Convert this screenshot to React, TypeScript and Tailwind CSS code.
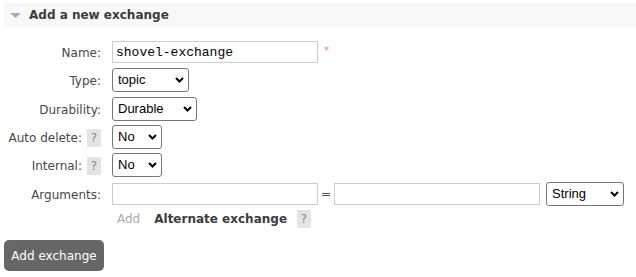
import React from "react";

const labelFont = { fontFamily: '"DejaVu Sans", Verdana, sans-serif' };

function Chevron() {
  return (
    <svg
      width="9"
      height="6"
      viewBox="0 0 9 6"
      className="pointer-events-none absolute right-[5px] top-1/2 -translate-y-1/2"
    >
      <path d="M1 1 L4.5 4.5 L8 1" fill="none" stroke="#000" strokeWidth="2" />
    </svg>
  );
}

function Select({ value, options, width }: { value: string; options: string[]; width: string }) {
  return (
    <div className={`relative inline-block ${width}`}>
      <select
        defaultValue={value}
        className="h-[24px] w-full appearance-none rounded-[3px] border border-[#767676] bg-white pl-[5px] text-[13px] text-black font-['Liberation_Sans',Arial,sans-serif] outline-none"
      >
        {options.map((o) => (
          <option key={o}>{o}</option>
        ))}
      </select>
      <Chevron />
    </div>
  );
}

function Help() {
  return (
    <span className="inline-flex h-[18px] w-[14px] items-center justify-center bg-[#e4e4e4] text-[12px] text-[#888]">
      ?
    </span>
  );
}

function Row({
  label,
  help,
  className,
  children,
}: {
  label: string;
  help?: boolean;
  className: string;
  children: React.ReactNode;
}) {
  return (
    <div className={`flex items-center ${className}`}>
      <div className="flex w-[97px] items-center justify-end gap-[5px] pt-[2px]">
        <span>{label}</span>
        {help && <Help />}
      </div>
      <div className="ml-[11px] flex items-center">{children}</div>
    </div>
  );
}

const inputCls =
  "h-[22px] w-[206px] border border-[#cccccc] bg-white px-[3px] text-[13px] text-black outline-none";

export default function App() {
  return (
    <div
      className="min-h-[277px] w-[636px] bg-white pl-1 pt-[3px] text-[12px] text-[#484848]"
      style={labelFont}
    >
      {/* section header */}
      <div className="flex h-[24px] items-center bg-[#f8f8f8]">
        <svg width="11" height="5" viewBox="0 0 11 5" className="ml-[6px]">
          <polygon points="0,0 11,0 5.5,5" fill="#aaaaaa" />
        </svg>
        <h2 className="ml-[8px] text-[12px] font-bold text-[#3c3c3c]">Add a new exchange</h2>
      </div>

      <form className="flex flex-col" onSubmit={(e) => e.preventDefault()}>
        <Row label="Name:" className="mt-[14px] h-[22px]">
          <input
            className={`${inputCls} font-['Liberation_Mono','Courier_New',monospace]`}
            defaultValue="shovel-exchange"
          />
          <span className="ml-[6px] -mt-[4px] text-[10px] text-[#f08080]">*</span>
        </Row>

        <Row label="Type:" className="mt-[5px] h-[24px]">
          <Select value="topic" options={["direct", "fanout", "headers", "topic"]} width="w-[77px]" />
        </Row>

        <Row label="Durability:" className="mt-[5px] h-[24px]">
          <Select value="Durable" options={["Durable", "Transient"]} width="w-[85px]" />
        </Row>

        <Row label="Auto delete:" help className="mt-[4px] h-[24px]">
          <Select value="No" options={["No", "Yes"]} width="w-[50px]" />
        </Row>

        <Row label="Internal:" help className="mt-[4px] h-[24px]">
          <Select value="No" options={["No", "Yes"]} width="w-[50px]" />
        </Row>

        <Row label="Arguments:" className="mt-[5px] h-[24px]">
          <input className={inputCls} />
          <span className="mx-[3px] text-[12px]">=</span>
          <input className={inputCls} />
          <div className="ml-[6px]">
            <Select value="String" options={["String", "Number", "Boolean", "List"]} width="w-[78px]" />
          </div>
        </Row>

        <div className="mt-[4px] flex h-[18px] items-center pl-[113px]">
          <span className="text-[#aaaaaa]">Add</span>
          <span className="ml-[14px] font-bold text-[#3c3c3c]">Alternate exchange</span>
          <span className="ml-[10px]">
            <Help />
          </span>
        </div>

        <div className="mt-[12px]">
          <button
            type="submit"
            className="h-[31px] w-[100px] rounded-[5px] bg-[#666666] text-[12px] text-white"
          >
            Add exchange
          </button>
        </div>
      </form>
    </div>
  );
}
